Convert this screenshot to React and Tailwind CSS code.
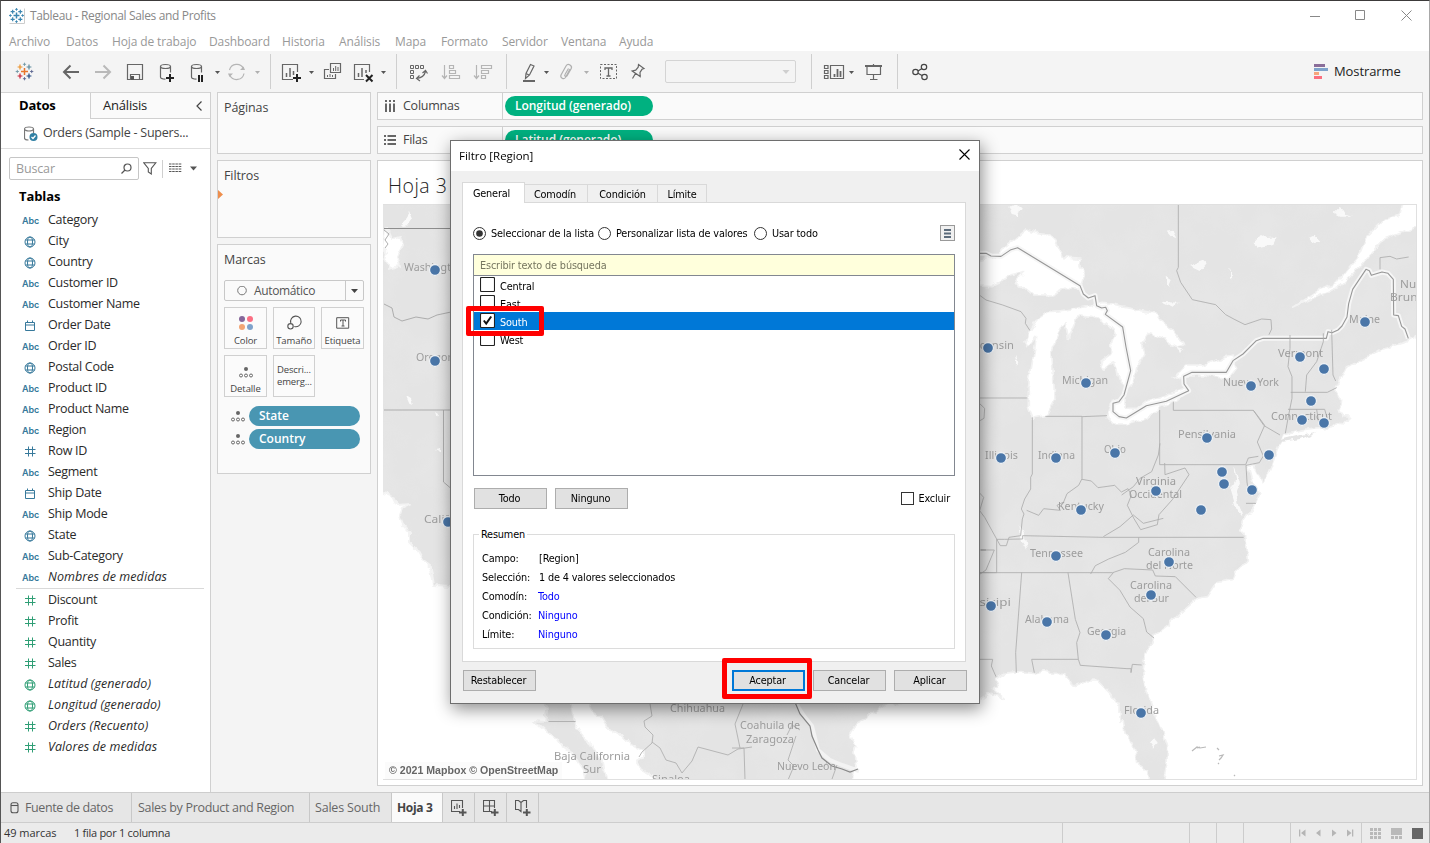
import React from "react";

const UI = "font-['Open_Sans','Noto_Sans',sans-serif]";

/* ---------- toolbar ---------- */

// Slots tile the toolbar from left to right; each one draws in window coordinates.
function Slot({ x, to, children }) {
  return (
    <svg width={to - x} height="41" viewBox={`${x} 51 ${to - x} 41`} className="block shrink-0" fill="none" stroke="#666" strokeWidth="1.2">
      {children}
    </svg>
  );
}

function Caret({ x, light }) {
  return <path d={`M${x - 2.5} 71h5l-2.5 3z`} fill={light ? "#b0b0b0" : "#555"} stroke="none" />;
}

function Sep() {
  return <div className="w-px h-[35px] mt-[3px] bg-[#cfcfcf] shrink-0" />;
}

function Spark({ cx, cy, s, sw = 1, c = "#333" }) {
  return <path d={`M${cx - s} ${cy}h${2 * s}M${cx} ${cy - s}v${2 * s}`} stroke={c} strokeWidth={sw} />;
}

function Logo({ cx, cy, k = 1, mono }) {
  const p = [
    [0, 0, 3.5, "#e8762c", 1.5],
    [-4.5, -4.5, 2.4, "#eb9129", 1.2],
    [4.5, -4.5, 2.4, "#59879b", 1.2],
    [-4.5, 4.5, 2.4, "#c72035", 1.2],
    [4.5, 4.5, 2.4, "#1f457e", 1.2],
    [0, -7.2, 1.6, "#7199a6", 0.9],
    [0, 7.2, 1.6, "#5b6591", 0.9],
    [-7.2, 0, 1.6, "#7199a6", 0.9],
    [7.2, 0, 1.6, "#5b6591", 0.9],
  ];
  return p.map(([x, y, s, c, w], i) => (
    <Spark key={i} cx={cx + x * k} cy={cy + y * k} s={s * k} sw={w} c={mono || c} />
  ));
}

function Db({ x }) {
  return (
    <>
      <path d={`M${x} 66.5v10.5q0 2 5 2.2M${x + 10} 66.5v6`} />
      <ellipse cx={x + 5} cy="66.5" rx="5" ry="2" />
    </>
  );
}

function Toolbar() {
  return (
    <div className="flex h-[41px] bg-[#f4f4f4] shrink-0">
      <Slot x={1} to={48}><Logo cx={24.5} cy={71.5} /></Slot>
      <Sep />
      <Slot x={49} to={87}><path d="M79 72H64M70.500 65.500L64 72l6.500 6.500" strokeWidth="2" /></Slot>
      <Slot x={87} to={119}><path d="M95 72h15M103.500 65.500L110 72l-6.500 6.500" stroke="#b9b9b9" strokeWidth="2" /></Slot>
      <Slot x={119} to={151}>
        <path d="M127.500 64.500h15v15h-15zM130.500 79.500v-5h9v5" />
        <path d="M131 76h3v4h-3z" fill="#555" stroke="none" />
      </Slot>
      <Slot x={151} to={183}>
        <Db x={160.5} />
        <path d="M166 78h8M170 74v8" stroke="#222" strokeWidth="2" />
      </Slot>
      <Slot x={183} to={224}>
        <Db x={191.5} />
        <path d="M199 75v7M202 75v7" stroke="#222" strokeWidth="2" />
        <Caret x={217.500} />
      </Slot>
      <Slot x={224} to={270}>
        <path d="M229.500 70a7.500 7.500 0 0 1 14-1.500M244 73.500a7.500 7.500 0 0 1-14 2" stroke="#b5b5b5" />
        <path d="M245 70h-5l3.500-3.500zM228 73.500h5l-3.500 3.500z" fill="#b5b5b5" stroke="none" />
        <Caret x={257.500} light />
      </Slot>
      <Sep />
      <Slot x={271} to={318}>
        <path d="M293 79.500h-10.500v-15h15V72" />
        <path d="M286.500 77v-4M290 77v-9M293.500 75v-4" strokeWidth="1.500" />
        <path d="M293 78h8M297 74v8" stroke="#222" strokeWidth="2" />
        <Caret x={311.500} />
      </Slot>
      <Slot x={318} to={348}>
        <path d="M330.500 63.500h10v9h-10zM329 69.500h-4.500v9h11v-4.500" />
        <path d="M333.500 71v-3M335.700 71v-5M338 71v-4M327.500 77v-2M330 77v-3M332.500 77v-2" strokeWidth="1" />
      </Slot>
      <Slot x={348} to={396}>
        <path d="M364 79.500h-9.500v-15h15V72" />
        <path d="M358.500 77v-4M362 77v-9M366 73v-3" strokeWidth="1.500" />
        <path d="M366 75l6.500 6.500M372.500 75l-6.500 6.500" stroke="#222" strokeWidth="2" />
        <Caret x={383.500} />
      </Slot>
      <Sep />
      <Slot x={397} to={436}>
        <path d="M410.500 65.500h3v3h-3zM415.500 65.500h3v3h-3zM420.500 65.500h3v3h-3zM410.500 70.500h3v3h-3zM410.500 75.500h3v3h-3z" strokeWidth="1" />
        <path d="M417 78.500q7-1 8.500-7M422.500 73l3-2.500 2 3M419.500 75.500l-3 3 3.500 2.500" />
      </Slot>
      <Slot x={436} to={468}>
        <g stroke="#b5b5b5"><path d="M444.500 65v13M442 75.500l2.500 3 2.500-3M449.500 65.500h4v3h-4zM449.500 70.500h6v3h-6zM449.500 75.500h10v3h-10z" /></g>
      </Slot>
      <Slot x={468} to={506}>
        <g stroke="#b5b5b5"><path d="M476.500 65v13M474 75.500l2.500 3 2.500-3M481.500 65.500h10v3h-10zM481.500 70.500h7v3h-7zM481.500 75.500h4v3h-4z" /></g>
      </Slot>
      <Sep />
      <Slot x={507} to={553}>
        <path d="M530.500 64.500l3.500 1.500-4.500 9-4 3.500.500-5zM526 73.500l3.500 1.800" />
        <path d="M523 81h12" strokeWidth="2" />
        <Caret x={546.500} />
      </Slot>
      <Slot x={553} to={594}>
        <path d="M570 69l-4.500 8.500a2.600 2.600 0 0 1-4.500-2.500l5-9a2.900 2.900 0 0 1 5 3l-4 7a1.200 1.200 0 0 1-2-1.500l3.500-6" stroke="#b0b0b0" />
        <Caret x={586.500} light />
      </Slot>
      <Slot x={594} to={625}>
        <path d="M600.500 64.500h16v14h-16z" strokeDasharray="2 1.500" strokeWidth="1" />
        <path d="M605 70v-2h7v2M608.500 68v8M606.500 76h4" strokeWidth="1.300" />
      </Slot>
      <Slot x={625} to={657}>
        <path d="M638.500 64.500l5.500 4-2 .8-2 3 .2 4.200-8-5.500 3.500-.8 2.500-3zM635.500 73.500l-3 5" />
      </Slot>
      <div className="w-[131px] h-[23px] mt-[9px] ml-2 mr-[15px] border border-[#d4d4d4] rounded-[2px] flex items-center justify-end pr-[5px] shrink-0">
        <svg width="8" height="4"><path d="M0.500 0h7l-3.500 4z" fill="#cfcfcf" /></svg>
      </div>
      <Sep />
      <Slot x={812} to={858}>
        <path d="M824.500 65.500h3.500v3h-3.500zM824.500 70.500h3.500v3h-3.500zM824.500 75.500h3.500v3h-3.500zM830.500 65.500h13v13h-13z" strokeWidth="1.200" />
        <path d="M834.500 77v-3M837.500 77v-8M840.500 77v-6" strokeWidth="1.800" />
        <Caret x={851.500} />
      </Slot>
      <Slot x={858} to={897}>
        <path d="M865 66h17" strokeWidth="2" />
        <path d="M867 66.500v8h13.500v-8M873.500 64v2M873.500 75v4M870 79.500h7.500" />
      </Slot>
      <Sep />
      <Slot x={898} to={940}>
        <g stroke="#444"><circle cx="915.500" cy="72" r="2.700" /><circle cx="924" cy="67" r="2.700" /><circle cx="924.500" cy="77" r="2.700" /><path d="M918 71l4-2.500M918 73.300l4 2.200" /></g>
      </Slot>
      <div className="ml-auto mr-[29px] flex items-center gap-[6px]">
        <svg width="14" height="15"><path d="M0 0h11v3H0z" fill="#8a6d99" /><path d="M0 4h14v3H0z" fill="#7fa3cb" /><path d="M0 8h5v3H0z" fill="#f6a57c" /><path d="M0 12h8v3H0z" fill="#fb6f7f" /></svg>
        <span className="text-[13px] text-[#222] tracking-[-0.1px] w-[66px] whitespace-nowrap">Mostrarme</span>
      </div>
    </div>
  );
}

/* ---------- data pane ---------- */

const FIELDS = [
  ["abc", "Category"], ["geo", "City"], ["geo", "Country"], ["abc", "Customer ID"], ["abc", "Customer Name"],
  ["date", "Order Date"], ["abc", "Order ID"], ["geo", "Postal Code"], ["abc", "Product ID"], ["abc", "Product Name"],
  ["abc", "Region"], ["num", "Row ID"], ["abc", "Segment"], ["date", "Ship Date"], ["abc", "Ship Mode"],
  ["geo", "State"], ["abc", "Sub-Category"], ["abc", "Nombres de medidas", true],
];
const MEASURES = [
  ["num", "Discount"], ["num", "Profit"], ["num", "Quantity"], ["num", "Sales"],
  ["geo", "Latitud (generado)", true], ["geo", "Longitud (generado)", true],
  ["num", "Orders (Recuento)", true], ["num", "Valores de medidas", true],
];

function TypeIcon({ kind }) {
  if (kind === "abc") return <span className="font-['Inter',sans-serif] font-semibold text-[9px] tracking-[-0.1px]">Abc</span>;
  return (
    <svg className="-ml-[2px]" width="12" height="12" viewBox="0 0 12 12" fill="none" stroke="currentColor" strokeWidth="1">
      {kind === "geo" && <><circle cx="6" cy="6" r="5" /><ellipse cx="6" cy="6" rx="2.500" ry="5" /><path d="M1.500 4h9M1.500 8h9" /></>}
      {kind === "date" && <><path d="M1.500 2.500h9v8h-9zM1.500 5h9M3.500 0.500v2M8.500 0.500v2" /></>}
      {kind === "num" && <path d="M4.500 0.500v10M8.500 0.500v10M1 3.500h10.500M1 7.500h10.500" />}
    </svg>
  );
}

function Field({ item, green }) {
  const [kind, name, italic] = item;
  return (
    <div className="flex items-center h-[21px]">
      <div className={`w-[47px] pl-[12px] flex justify-center ${green ? "text-[#2f9e75]" : "text-[#37799b]"}`}>
        <TypeIcon kind={kind} />
      </div>
      <span className={`text-[12.500px] text-[#2a2a2a] whitespace-nowrap ${italic ? "italic tracking-[0.080px]" : "tracking-[-0.280px]"}`}>{name}</span>
    </div>
  );
}

function DataPane() {
  return (
    <div className="w-[210px] shrink-0 bg-white border-r border-[#d0d0d0] flex flex-col">
      <div className="flex h-[27px] text-[13px] tracking-[-0.200px] border-t border-[#d4d4d4]">
        <div className="w-[89px] pl-[18px] flex items-center font-bold text-black">Datos</div>
        <div className="flex-1 border-l border-b border-[#d0d0d0] bg-[#fafafa] pl-[12px] pr-[8px] flex items-center justify-between text-[#222]">
          Análisis
          <svg width="6" height="10" fill="none" stroke="#444" strokeWidth="1.200"><path d="M5.500 0.500L1 5l4.500 4.500" /></svg>
        </div>
      </div>
      <div className="flex items-center h-[30px] border-b border-[#dedede] pl-[23px]">
        <svg width="14" height="16" fill="none" stroke="#777" strokeWidth="1.200">
          <ellipse cx="5" cy="3" rx="4.500" ry="2" /><path d="M0.500 3v9q0 2 4 2M9.500 3v4" /><circle cx="9.500" cy="11" r="4" fill="#2f7fa3" stroke="none" /><path d="M7.500 11l1.500 1.500 2.500-3" stroke="#fff" />
        </svg>
        <span className="ml-[5px] text-[12.500px] tracking-[-0.230px] text-[#444] whitespace-nowrap">Orders (Sample - Supers...</span>
      </div>
      <div className="flex items-center h-[23px] mt-2 pl-2">
        <div className="w-[130px] h-[23px] border border-[#c6c6c6] rounded-[2px] flex items-center justify-between pl-[6px] pr-[6px] text-[12.500px] tracking-[-0.150px] text-[#9a9a9a]">
          <span className="pt-px">Buscar</span>
          <svg width="11" height="11" fill="none" stroke="#555" strokeWidth="1.200"><circle cx="6.500" cy="4.500" r="3.500" /><path d="M4 7L0.500 10.500" /></svg>
        </div>
        <svg className="ml-1" width="14" height="13" fill="none" stroke="#555" strokeWidth="1.100"><path d="M0.800 0.800h12L8.300 6.500v5.500l-3-2v-3.500z" /></svg>
        <div className="w-px h-[18px] bg-[#cfcfcf] ml-[5px]" />
        <svg className="ml-[6px]" width="13" height="11" stroke="#555" strokeWidth="1.200"><path d="M0 1h13M0 3.500h13M0 6h13M0 8.500h13" strokeDasharray="2.500 0.700" /></svg>
        <svg className="ml-[8px]" width="7" height="5"><path d="M0 0.500h7l-3.500 4z" fill="#555" /></svg>
      </div>
      <div className="pl-[18px] h-[28px] mt-[2px] pt-px flex items-center text-[13px] tracking-[-0.080px] font-bold text-black">Tablas</div>
      <div>{FIELDS.map((f) => <Field key={f[1]} item={f} />)}</div>
      <div className="h-px bg-[#d9d9d9] ml-[15px] mr-[6px]" />
      <div className="mt-[1px]">{MEASURES.map((f) => <Field key={f[1]} item={f} green />)}</div>
    </div>
  );
}

/* ---------- shelves ---------- */

function DetailDots() {
  return (
    <svg width="14" height="11" fill="none" stroke="#666" strokeWidth="1"><circle cx="7" cy="2" r="2" fill="#666" stroke="none" /><circle cx="2" cy="8.500" r="1.500" /><circle cx="7" cy="8.500" r="1.500" /><circle cx="12" cy="8.500" r="1.500" /></svg>
  );
}

function MarkButton({ label, children }) {
  return (
    <div className="h-[42px] border border-[#d0d0d0] bg-[#fbfbfb] flex flex-col items-center text-[9.500px] tracking-[-0.100px] text-[#444]">
      <div className="h-[27px] flex items-center pt-[2px]">{children}</div>
      <span className="leading-[12px] whitespace-nowrap">{label}</span>
    </div>
  );
}

function Shelves() {
  const card = "border border-[#d0d0d0] bg-[#fafafa] px-[6px] text-[12.500px] tracking-[-0.100px] text-[#444]";
  return (
    <div className="w-[154px] ml-[6px] shrink-0 flex flex-col gap-[6px]">
      <div className={`${card} h-[62px] pt-[6px]`}>Páginas</div>
      <div className={`${card} h-[78px] pt-[6px] relative`}>
        Filtros
        <svg className="absolute left-0 top-[29px]" width="5" height="9"><path d="M0 0l5 4.500L0 9z" fill="#ee8e4c" /></svg>
      </div>
      <div className={`${card} h-[230px] pt-[6px]`}>
        <span className="block leading-[18px]">Marcas</span>
        <div className="mt-[11px] h-[21px] border border-[#c8c8c8] rounded-[2px] flex items-center text-[12px] tracking-[-0.350px] text-[#555]">
          <svg className="ml-[12px] mr-[7px]" width="10" height="10" fill="none" stroke="#777"><circle cx="5" cy="4.500" r="4.300" /></svg>
          Automático
          <div className="ml-auto w-[18px] h-full border-l border-[#c8c8c8] flex items-center justify-center">
            <svg width="7" height="4"><path d="M0 0h7l-3.500 4z" fill="#444" /></svg>
          </div>
        </div>
        <div className="mt-[6px] grid grid-cols-[43px_42px_43px] gap-[6px]">
          <MarkButton label="Color">
            <svg width="14" height="14"><circle cx="3" cy="3" r="3" fill="#86679a" /><circle cx="11" cy="3" r="3" fill="#fb6f83" /><circle cx="3" cy="11" r="3" fill="#f3a575" /><circle cx="11" cy="11" r="3" fill="#7fa2cb" /></svg>
          </MarkButton>
          <MarkButton label="Tamaño">
            <svg width="15" height="15" fill="none" stroke="#555" strokeWidth="1.100"><path d="M3.800 8a5.300 5.300 0 1 1 3.500 3.500" /><circle cx="3.500" cy="11.300" r="2.700" /></svg>
          </MarkButton>
          <MarkButton label="Etiqueta">
            <svg width="14" height="12" fill="none" stroke="#555"><path d="M0.700 0.700h12v10.500h-12zM4.500 4.500v-1.500h5v1.500M7 3v6M5.500 9h3" /></svg>
          </MarkButton>
          <MarkButton label="Detalle"><div className="pt-[3px]"><DetailDots /></div></MarkButton>
          <div className="h-[42px] border border-[#d0d0d0] bg-[#fbfbfb] pl-[3px] pt-[8px] text-[9.500px] leading-[12px] tracking-[-0.150px] text-[#444]">Descri...<br />emerg...</div>
        </div>
        <div className="mt-[9px] flex flex-col gap-[3px] pl-[7px]">
          {["State", "Country"].map((s) => (
            <div key={s} className="flex items-center gap-[4px]">
              <DetailDots />
              <div className="w-[111px] h-[20px] rounded-full bg-[#4996b2] text-white font-semibold text-[12px] tracking-normal flex items-center pl-[10px]">{s}</div>
            </div>
          ))}
        </div>
      </div>
    </div>
  );
}

function AxisShelf({ icon, name, pill }) {
  return (
    <div className="h-[28px] border border-[#d0d0d0] bg-[#fafafa] flex items-center text-[12.500px] tracking-[-0.250px] text-[#444]">
      <div className="w-[125px] h-full border-r border-[#d0d0d0] flex items-center pl-[6px] gap-[7px]">{icon}{name}</div>
      <div className="ml-[2px] w-[148px] h-[20px] rounded-full bg-[#00b180] text-white font-semibold text-[12px] tracking-[-0.050px] pl-[10px] flex items-center whitespace-nowrap">{pill}</div>
    </div>
  );
}

/* ---------- map ---------- */

const DOTS = [
  [435, 270], [435, 361], [448, 522], [988, 348], [1086, 383], [1001, 458], [1056, 458], [1115, 453], [1207, 438],
  [1251, 386], [1300, 357], [1324, 369], [1311, 401], [1302, 420], [1324, 423], [1365, 322], [1269, 455], [1222, 472],
  [1224, 484], [1252, 490], [1156, 491], [1201, 510], [1081, 510], [1056, 556], [1169, 562], [1151, 595], [991, 606],
  [1047, 622], [1106, 635], [1141, 713],
];
const LABELS = [
  [404, 271, "Washington", 60], [416, 361, "Oregon", 38], [424, 523, "California", 54], [961, 349, "Wisconsin", 53],
  [1062, 384, "Michigan", 46], [985, 459, "Illinois", 33], [1038, 459, "Indiana", 37], [1104, 453, "Ohio", 22],
  [1178, 438, "Pensilvania", 58], [1223, 386, "Nueva York", 56], [1278, 357, "Vermont", 45], [1271, 420, "Connecticut", 61],
  [1349, 323, "Maine", 31], [1400, 288, "Nueva", 35], [1390, 301, "Brunswick", 58], [1136, 485, "Virginia", 40],
  [1129, 497.5, "Occidental", 53], [1058, 510, "Kentucky", 46], [1030, 557, "Tennessee", 53], [1148, 556, "Carolina", 42],
  [1146, 569, "del Norte", 47], [1130, 589, "Carolina", 42], [1134, 602, "del Sur", 35], [964, 606, "Misisipi", 47],
  [1025, 623, "Alabama", 44], [1087, 635, "Georgia", 39], [1124, 714, "Florida", 35], [670, 712, "Chihuahua", 55],
  [740, 729, "Coahuila de", 60], [746, 743, "Zaragoza", 48], [777, 770, "Nuevo León", 59], [554, 760, "Baja California", 76],
  [583, 773, "Sur", 18], [652, 783, "Sinaloa", 38],
];

function MapView() {
  return (
    <svg width="1034" height="575" viewBox="383 205 1034 575" className="block bg-[#e4e4e4]">
      <defs>
        <filter id="relief" x="0" y="0" width="100%" height="100%"><feTurbulence type="fractalNoise" baseFrequency="0.025" numOctaves="3" seed="4" /><feColorMatrix values="0 0 0 0 1  0 0 0 0 1  0 0 0 0 1  0.9 0 0 0 -0.34" /></filter>
        <filter id="coast" x="-5%" y="-5%" width="110%" height="110%"><feTurbulence type="fractalNoise" baseFrequency="0.12" numOctaves="2" seed="9" /><feDisplacementMap in="SourceGraphic" scale="7" xChannelSelector="R" yChannelSelector="G" /></filter>
      </defs>
      <rect x="383" y="205" width="1034" height="575" filter="url(#relief)" opacity="0.22" />
      <g filter="url(#coast)">
        <g fill="#fff" stroke="#f3f3f3" strokeWidth="2" strokeLinejoin="round">
          <path d="M375 491L386 494 393 497 397 505 410 504 402 508 399 515 403 525 409 532 409 542 416 549 422 560 430 566 432 574 434 585 450 586 500 640 548 707 545 722 534 721 548 733 556 738 560 744 572 753 583 770 588 790H375z" />
          <path d="M570 700L573 717 577 727 583 737 592 744 596 755 603 762 608 790H664L652 776 640 768 636 762 643 757 643 750 632 744 625 740 618 733 607 728 601 718 592 712 586 700z" />
          <path d="M385 230l4 2 3 7 8-2 3 8-6 12 3 9-11 3-4-7 2-9-5-5z" />
          <path d="M402 225l8-12 3 7-3 4zM406 396l5 3 2 6-4-2zM435 450l5-1v4zM436 411l3 2-1 4z" stroke="none" opacity="0.8" />
        </g>
        <g transform="translate(970 200) scale(0.33333)" fill="#fff" stroke="#f2f2f2" strokeWidth="5" strokeLinejoin="round">
          <path d="M1300 0L1290 45 1240 60 1190 110 1165 170 1130 210 1100 250 1040 275 970 322 1050 285 1110 260 1180 190 1240 120 1360 72V0z" />
          <path d="M1360 393L1310 425 1230 450 1180 480 1130 500 1110 540 1095 570 1112 600 1108 630 1122 650 1142 652 1120 672 1100 668 1085 680 1060 684 1000 692 940 705 925 735 915 770 895 820 875 845 850 800 835 792 850 850 868 885 850 920 820 965 812 990 825 1015 832 1080 800 1115 790 1135 740 1145 710 1190 680 1195 640 1230 600 1270 550 1310 525 1365 520 1410 530 1470 550 1530 580 1600 593 1640 591 1690 575 1765H1360z" />
          <path d="M540 1765L530 1710 500 1690 496 1655 480 1620 465 1600 460 1560 450 1570 450 1520 420 1480 380 1440 350 1440 330 1455 310 1460 300 1440 280 1420 250 1420 220 1412 190 1420 150 1415 100 1420 75 1435 85 1460 70 1470 100 1495 60 1480 28 1500-60 1500-246 1509-306 1551-340 1570-360 1599-342 1641-348 1660-342 1700-360 1765z" />
          <path d="M20 185L28 258 60 260 90 245 120 225 165 215 135 245 150 262 160 260 190 285 250 285 280 262 330 265 345 220 330 200 330 175 280 170 270 150 255 120 240 105 200 100 165 90 130 120 100 140 90 165z" />
          <path d="M290 330L240 335 200 360 180 390 165 425 175 438 200 410 188 480 175 560 175 620 190 655 230 645 255 600 248 500 245 450 265 400 285 365 295 415 325 345 370 350 410 370 435 400 425 430 425 460 388 488 400 507 430 480 445 540 470 565 490 550 500 500 525 460 515 430 535 400 570 412 620 438 641 432 605 385 580 370 560 340 480 325 400 310 360 318z" />
          <path d="M412 655L425 605 465 590 465 625 500 625 530 603 590 585 655 560 650 575 620 600 560 630 530 655 470 672 430 672z" />
          <path d="M610 538L650 495 700 495 740 480 790 465 800 500 775 535 700 525 650 525z" />
          <path d="M115 20l20-10 20 15-8 25-22-5zM590 95l20-3 12 22-20-5zM850 130l25-28 15 12 30-2-10 20-45 10zM1015 115l15-8 18 18-20 8zM1090 40l20-20 15 25 25 5-40 0zM660 195l40-15 10 10-18 20zM780 205l10 30-10 5zM590 230l15 10-10 25zM575 305l55 3-25 12zM620 440l20 5-10 18zM135 465l10 15-5 15zM790 800l20 50-12 30 20 70-18-20-18-60 14-30zM540 1628l12-14 14 18-14 14zM148 975l16 30 8 45-18-30z" stroke="none" opacity="0.75" />
          <path d="M920 722l60-15 60-12-50 22-50 8z" fill="#e4e4e4" stroke="none" />
        </g>
      </g>
      <path d="M1192 751l5-4 3 1 6-1M1197 748l3-1M1217 748l2 2M1219 756l4-1-2 3-2 2M1218 763l1 1M1234 775l1 1" fill="none" stroke="#b9b9b9" strokeWidth="1.200" />
      <g transform="translate(970 200) scale(0.33333)" fill="none" strokeLinejoin="round">
        {[["#f6f6f6", 15], ["#979797", 3.3]].map(([c, w]) => (
          <path key={c} stroke={c} strokeWidth={w} d="M28 160h20l15 8 30 1 30-20 20-6L330 257l10 25 15 12 20-7 5 30 15 7 12-2 5 10-6 11 52 38 10 60L482 512 462 585l-15 20-18 5v25l18 15 22 4 60-37 60-13 67-32-14-20-1-23 25-12h103l20-35 30-20 40-40 20-7h190l5-20 12 3 18-8 12-12 15-27 5-40 12-43 40-60 10 4 6 14 32-10 18 4 16 18 1 107 14 2 10 32 10 8 10 28" />
        ))}
      </g>
      <g transform="translate(970 200) scale(0.33333)" fill="none" stroke="#acacac" strokeWidth="2.500" strokeLinejoin="round">
        <path d="M625 12v190l-5 10 12 35 35 52 70 15 30 30 28 15 30 15 50-17 28 2 2 28-8 17M28 285l20 15 50 15 55 20 15 20-2 15 14 22M28 594h144M226 649h110M336 650l75-3M187 652v170l-5 10v35l-18 30-10 30 8 15-5 15-5 50-35 5-8 25-18 0-25-45-22-40-15-20 12-40-14-15M336 650v186l-10 20-35 25-10 25-20 10 10 15-50-5-15 20-36-15M336 838l28 5 20 20 50-7 20 20 20-10 10 20-12 30 20 40 20 33 50-15 5-30 40-45 50-75-12-20-60 20-1-35M569 630v164h258M570 730l-5 35-20 50-35 20-20 25-35 25M610 605v26h240l12 15 22 30-22 50 18 42-12 20-40 8 3 50 5 35M850 631l32 46 48 28M827 794l8-20 30-5M960 405v40l-6 55 12 30 0 65-12 60-8 45M1085 390l4 135 8 18M1060 400l0 25-20 60-30 40-4 50M962 577h110l28-14M954 628h110l10 35M1040 628l6 40M1230 208v-35l30-4 20 8 36-6M28 610l16 15-2 30-14 8" />
        <path d="M28 1118h52v-100l24 0 54-1v-10l242 5h106M506 1012h315M400 1010l50-30 40-35 30 25 60-15M506 1012v15l-40 30-50 20-40 20-14 25M28 1118h400l35-12 85 4 8 18 60 2 62 62M28 1050h20l-15 0 40 0-25 60-22 15M430 1118l-15 18 35 35 30 50 40 35 10 40 22 18M155 1118l-18 240 2 60M294 1118l22 140 14 40-10 30 5 50-140 0 8 40M325 1378l6 18 140 10h12v12l4-25 28 2M28 1378h40l-4 20 14 32M828 910h30" />
      </g>
      <g fill="none" stroke="#a6a6a6" strokeWidth="0.900">
        <path d="M384 228.500h66" stroke="#8d8d8d" strokeWidth="1.200" />
        <path d="M384 230l5 4-4 6 3 4-3 4M384 304l8 4 2 9 8 4 14-4 12 2 9-4 14-3M384 410h66M443.500 410v72l7 6" />
        <path d="M548.500 721.500h27M650 704l2 12-8 5 1 6 8 8-1 8-10 9-3 5M652 742l8 6 6 12 10 3 6 10 10-12 6-14 30 8 10-6 14-2M732 748h12l1 32M743 704l-8 20 5 24M800 730l-8-5-5 10M796 736l-8 24 6 6-6 14M837 765l-5 14" stroke="#b0b0b0" />
        <path d="M794 700l10 16 8 10 6 24 12 10 12 5 17 6" stroke="#f3f3f3" strokeWidth="4" />
        <path d="M794 700l6 14 10 12 2 10 6 14 4 8 10 8 10 3 8 3 8-3" stroke="#888" strokeWidth="1.200" />
      </g>
      <g className="font-['Noto_Sans',sans-serif] text-[11px]" fill="#9d9d9d">
        {LABELS.map(([x, y, t, w]) => (
          <text key={t + y} x={x} y={y} textLength={w} lengthAdjust="spacingAndGlyphs">{t}</text>
        ))}
      </g>
      {DOTS.map(([x, y]) => <circle key={`${x}-${y}`} cx={x} cy={y} r="5.500" fill="#4a76a8" stroke="#eef1f4" strokeWidth="1.300" />)}
    </svg>
  );
}

function Sheet() {
  return (
    <div className="flex-1 ml-[6px] mr-[6px] flex flex-col">
      <AxisShelf name="Columnas" pill="Longitud (generado)" icon={<svg width="12" height="12" stroke="#666" strokeWidth="2"><path d="M2 0v2M6 0v2M10 0v2M2 3.500V12M6 3.500V12M10 3.500V12" /></svg>} />
      <div className="h-[6px]" />
      <AxisShelf name="Filas" pill="Latitud (generado)" icon={<svg width="12" height="12" stroke="#666" strokeWidth="2"><path d="M0 2h2M0 6h2M0 10h2M3.500 2H12M3.500 6H12M3.500 10H12" /></svg>} />
      <div className="mt-[6px] h-[626px] border border-[#d0d0d0] bg-white relative">
        <div className="h-[43px] pl-[10px] pt-[9px] text-[19.500px] font-light leading-[32px] tracking-[0.500px] text-[#222]">Hoja 3</div>
        <div className="ml-[5px] w-[1034px] h-[576px] border-t border-r border-b border-[#e0e0e0] overflow-hidden"><MapView /></div>
        <div className="absolute left-[7px] bottom-[6px] h-[17px] px-1 bg-[#fafafa]/80 text-[10.600px] leading-[17px] font-semibold text-[#666] font-['Liberation_Sans',sans-serif] whitespace-nowrap">© 2021 Mapbox © OpenStreetMap</div>
      </div>
    </div>
  );
}

/* ---------- filter dialog ---------- */

function Radio({ on }) {
  return (
    <svg width="13" height="13" className="shrink-0"><circle cx="6.500" cy="6.500" r="6" fill="#fff" stroke="#333" />{on && <circle cx="6.500" cy="6.500" r="3.300" fill="#333" />}</svg>
  );
}

function Btn({ children, primary, className = "" }) {
  return (
    <div className={`w-[73px] h-[21px] bg-[#e1e1e1] flex items-center justify-center pt-px pr-[2px] ${primary ? "border-2 border-[#0078d7]" : "border border-[#adadad]"} ${className}`}>{children}</div>
  );
}

function CheckRow({ name, on }) {
  return (
    <div className={`h-[18px] flex items-center pl-[6px] gap-[5px] pb-px ${on ? "bg-[#0078d7] text-white" : ""}`}>
      <svg width="15" height="15" className="shrink-0"><rect x="0.500" y="0.500" width="14" height="14" rx="1" fill="#fff" stroke="#222" strokeWidth="1.100" />{on && <path d="M3.800 7.500l2.400 3 5-7" fill="none" stroke="#111" strokeWidth="2" />}</svg>
      <span className="pt-[5px]">{name}</span>
    </div>
  );
}

const SUMMARY = [["Campo:", "[Region]"], ["Selección:", "1 de 4 valores seleccionados"], ["Comodín:", "Todo", true], ["Condición:", "Ninguno", true], ["Límite:", "Ninguno", true]];

function Dialog() {
  const tab = "h-[19px] mt-[2px] pt-[2px] border-t border-r border-[#d9d9d9] flex items-center justify-center";
  return (
    <div className="absolute left-[450px] top-[140px] w-[530px] h-[564px] border border-[#6e6e6e] bg-[#f0f0f0] shadow-[2px_5px_16px_rgba(0,0,0,0.45)] font-['DejaVu_Sans_Condensed','DejaVu_Sans',sans-serif] text-[10.800px] tracking-[-0.150px] leading-[14px] text-black">
      <div className={`${UI} h-[30px] bg-white flex items-center justify-between pl-2 pr-[9px] text-[11.500px] tracking-[-0.020px]`}>
        Filtro [Region]
        <svg className="-mt-[3px]" width="11" height="11" stroke="#000" strokeWidth="1.100"><path d="M0.500 0.500l10 10M10.500 0.500l-10 10" /></svg>
      </div>
      <div className="mt-[11px] ml-[11px] flex h-[21px] relative">
        <div className="w-[63px] h-[21px] pt-px bg-white border border-b-0 border-[#d9d9d9] flex items-center justify-center pr-1">General</div>
        <div className={`${tab} w-[63px] pr-[2px]`}>Comodín</div>
        <div className={`${tab} w-[70px]`}>Condición</div>
        <div className={`${tab} w-[49px]`}>Límite</div>
      </div>
      <div className="-mt-px ml-[11px] w-[504px] h-[460px] border border-[#d9d9d9] bg-white pl-[10px] pr-[10px]">
        <div className="flex items-center h-[16px] mt-[22px] whitespace-nowrap">
          <Radio on /><span className="ml-[5px] w-[107px] pt-[2px]">Seleccionar de la lista</span>
          <Radio /><span className="ml-[5px] w-[138px] pt-[2px]">Personalizar lista de valores</span>
          <Radio /><span className="ml-[5px] pt-[2px]">Usar todo</span>
          <div className="ml-auto w-[15px] h-[16px] border border-[#999] bg-[#f0f0f0] flex items-center justify-center">
            <svg width="7" height="9" stroke="#5b6b7b" strokeWidth="2"><path d="M0 1h7M0 4.500h7M0 8h7" /></svg>
          </div>
        </div>
        <div className="mt-[13px] h-[222px] border border-[#828790]">
          <div className="h-[21px] bg-[#ffffdc] border-b border-[#828790] text-[#767660] pl-[6px] pt-[2px] flex items-center">Escribir texto de búsqueda</div>
          <CheckRow name="Central" />
          <CheckRow name="East" />
          <CheckRow name="South" on />
          <CheckRow name="West" />
        </div>
        <div className="mt-[12px] pl-px flex items-center gap-2">
          <Btn>Todo</Btn><Btn>Ninguno</Btn>
          <div className="ml-auto flex items-center gap-1 pr-[5px]"><div className="w-[13px] h-[13px] border border-[#333]" /><span className="pt-px">Excluir</span></div>
        </div>
        <div className="mt-[25px] h-[115px] border border-[#dcdcdc] relative pl-2 pt-[14px]">
          <span className="absolute left-[5px] top-[-7px] bg-white px-[2px]">Resumen</span>
          {SUMMARY.map(([k, v, link]) => (
            <div key={k} className="flex h-[19px] items-center whitespace-nowrap">
              <span className="w-[57px]">{k}</span><span className={link ? "text-[#0000ff] -ml-px" : ""}>{v}</span>
            </div>
          ))}
        </div>
      </div>
      <div className="mt-2 ml-[12px] mr-[12px] flex items-center gap-2">
        <Btn>Restablecer</Btn>
        <Btn primary className="ml-auto">Aceptar</Btn>
        <Btn>Cancelar</Btn>
        <Btn>Aplicar</Btn>
      </div>
      <div className="absolute left-[15px] top-[165px] w-[78px] h-[30px] border-[5px] border-[#ff0000] rounded-[2px]" />
      <div className="absolute left-[271px] top-[517px] w-[90px] h-[41px] border-[5px] border-[#ff0000] rounded-[2px]" />
    </div>
  );
}

/* ---------- bottom bars ---------- */

function SheetTabs() {
  const t = "h-full border-r border-[#c8c8c8] flex items-center shrink-0 whitespace-nowrap";
  return (
    <div className="h-[31px] bg-[#e6e6e6] border-t border-b border-[#cdcdcd] flex text-[12.500px] tracking-[-0.320px] text-[#666] shrink-0">
      <div className={`${t} w-[131px] pl-[9px] gap-[5px]`}>
        <svg width="10" height="12" fill="none" stroke="#555" strokeWidth="1.100"><rect x="1" y="0.700" width="7" height="10" rx="2" /><path d="M1 3.500h7" /></svg>
        <span className="pt-px tracking-[-0.400px]">Fuente de datos</span>
      </div>
      <div className={`${t} w-[178px] pl-[6px] pt-px`}>Sales by Product and Region</div>
      <div className={`${t} w-[82px] pl-[5px] pt-px tracking-[-0.200px]`}>Sales South</div>
      <div className={`${t} w-[51px] pl-[5px] bg-[#fafafa] font-bold text-[12px] text-[#444]`}>Hoja 3</div>
      {["M9 11.500H0.500V0.500h11V8M3.500 9V6M6 9V3.500M8.500 8V5", "M9 11.500H0.500V0.500h11V8M0.500 6h11M6.500 0.500v11", "M6 2.500L3.500 0.500h-3v9h3L6 11.500V2.500l2.500-2h3V8"].map((d) => (
        <div key={d} className={`${t} w-[32px] justify-center`}>
          <svg width="16" height="16" fill="none" stroke="#555" strokeWidth="1.100"><path d={d} /><path d="M8 12.500h7.500M11.800 9v7" strokeWidth="2" /></svg>
        </div>
      ))}
    </div>
  );
}

function StatusBar() {
  return (
    <div className="h-[20px] bg-[#ebebeb] flex items-center text-[11px] tracking-[-0.050px] text-[#333] pl-[3px] whitespace-nowrap">
      <span className="w-[70px]">49 marcas</span><span className="tracking-[-0.280px]">1 fila por 1 columna</span>
      <div className="ml-auto flex h-full">
        <div className="w-[127px] border-l border-[#ccc]" />
        <div className="w-[27px] border-l border-[#ccc]" />
        <div className="w-[27px] border-l border-[#ccc]" />
        <div className="w-[47px] border-l border-[#ccc]" />
        <div className="w-[71px] border-l border-[#ccc] pl-[8px] flex items-center">
          <svg width="56" height="8" fill="#b5b5b5"><path d="M0 0.500h1.300v7H0zM6.500 0.500v7L2 4zM21.500 0.500v7L17 4zM33 0.500v7L37.500 4zM48 0.500v7L52.500 4zM53 0.500h1.300v7H53z" /></svg>
        </div>
        <div className="w-[68px] border-l border-[#ccc] flex items-center pl-[8px] gap-[10px]">
          <svg width="11" height="11" fill="#b9b9b9"><path d="M0 0h3v3H0zM4 0h3v3H4zM8 0h3v3H8zM0 4h3v3H0zM4 4h3v3H4zM8 4h3v3H8zM0 8h3v3H0zM4 8h3v3H4zM8 8h3v3H8z" /></svg>
          <svg width="11" height="11" fill="#b9b9b9"><path d="M0 0h11v7H0zM0 8h3v3H0zM4 8h3v3H4zM8 8h3v3H8z" /></svg>
          <div className="w-[11px] h-[11px] bg-[#666]" />
        </div>
      </div>
    </div>
  );
}

const MENU = [["Archivo", "w-[57px]"], ["Datos", "w-[46px]"], ["Hoja de trabajo", "w-[97px]"], ["Dashboard", "w-[73px]"], ["Historia", "w-[57px]"], ["Análisis", "w-[56px]"], ["Mapa", "w-[46px]"], ["Formato", "w-[61px]"], ["Servidor", "w-[59px]"], ["Ventana", "w-[58px]"], ["Ayuda", "w-[50px]"]];

export default function App() {
  return (
    <div className={`${UI} relative w-[1430px] h-[843px] overflow-hidden bg-[#f4f4f4] border-t border-t-[#3c3a3a] border-l border-l-[#555] border-r border-r-[#a8a8a8] flex flex-col`}>
      <div className="h-[29px] bg-white flex items-center shrink-0">
        <svg className="ml-2" width="16" height="16"><path d="M0.500 15.500h15v-15" fill="none" stroke="#ccc" /><Logo cx={7.500} cy={7.500} k={0.850} mono="#3b86b0" /></svg>
        <span className="ml-[5px] pt-px text-[12px] tracking-[-0.350px] text-[#888]">Tableau - Regional Sales and Profits</span>
        <svg className="ml-auto mr-[17px]" width="102" height="12" fill="none" stroke="#888"><path d="M0 6.500h10M45.500 0.500h9v9h-9zM91.500 0.500l10 10M101.500 0.500l-10 10" /></svg>
      </div>
      <div className="h-[21px] bg-white flex items-center pl-2 pt-[3px] text-[12px] tracking-[-0.120px] text-[#999] whitespace-nowrap shrink-0">
        {MENU.map(([m, w]) => <span key={m} className={w}>{m}</span>)}
      </div>
      <Toolbar />
      <div className="flex h-[700px] shrink-0">
        <DataPane />
        <Shelves />
        <Sheet />
      </div>
      <SheetTabs />
      <StatusBar />
      <div className="absolute -left-px -top-px w-0 h-0"><Dialog /></div>
    </div>
  );
}
